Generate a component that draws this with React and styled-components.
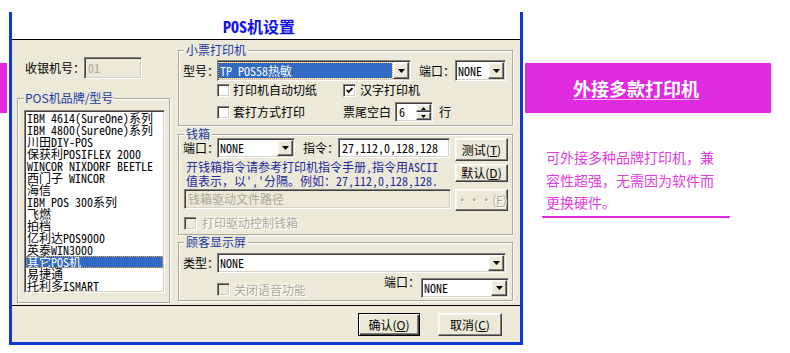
import React from 'react';
import styled, { createGlobalStyle } from 'styled-components';

const FACE = '#ECE9D8';
const UI = `"Noto Sans CJK SC", "Noto Sans", sans-serif`;
const MONO = `"Noto Sans Mono CJK SC", "Noto Sans CJK SC", monospace`;

const sunken = `
  border: 1px solid;
  border-color: #808080 #ffffff #ffffff #808080;
  box-shadow: inset 1px 1px 0 #404040, inset -1px -1px 0 #D4D0C8;
`;
const raised = `
  border: 1px solid;
  border-color: #ffffff #404040 #404040 #ffffff;
  box-shadow: inset -1px -1px 0 #808080, inset 1px 1px 0 #F6F5F0;
`;

const GlobalStyle = createGlobalStyle`
  html, body { margin: 0; padding: 0; background: #fff; }
  body { font-family: ${UI}; }
`;

const Page = styled.div`
  display: flex;
  align-items: flex-start;
  width: 790px;
  height: 353px;
  overflow: hidden;
`;

const SideStrip = styled.div`
  flex: none;
  width: 7px;
  height: 50px;
  margin: 63px 2px 0 0;
  background: #E02AE0;
`;

const Dialog = styled.div`
  flex: none;
  width: 508px;
  margin-top: 12px;
  border: 3px solid #0B3CCF;
  border-top: none;
  display: flex;
  flex-direction: column;
`;

const Header = styled.div`
  height: 27px;
  background: #fff;
  border-bottom: 1px solid #000;
  display: flex;
  align-items: center;
  justify-content: center;
  padding-right: 14px;
`;

const Title = styled.div`
  font: bold 16px/18px ${MONO};
  color: #1010F0;
`;

const Main = styled.div`
  height: 265px;
  background: ${FACE};
  border-bottom: 1px solid #000;
  display: flex;
`;

const LeftColumn = styled.div`
  width: 158px;
  padding: 17px 0 0 5px;
  display: flex;
  flex-direction: column;
`;

const RightColumn = styled.div`
  width: 335px;
  padding: 10px 0 0 3px;
  display: flex;
  flex-direction: column;
`;

const Row = styled.div`
  display: flex;
  align-items: center;
  height: ${(p) => p.$h || 20}px;
  margin-top: ${(p) => p.$mt || 0}px;
  margin-left: ${(p) => p.$ml || 0}px;
`;

const Label = styled.span`
  flex: none;
  width: ${(p) => p.$w}px;
  margin-left: ${(p) => p.$ml || 0}px;
  margin-top: ${(p) => p.$mt || 0}px;
  align-self: ${(p) => (p.$top ? 'flex-start' : 'auto')};
  font: 12px/14px ${UI};
  color: #000;
  white-space: nowrap;
`;

const TextField = styled.div`
  flex: none;
  box-sizing: border-box;
  width: ${(p) => p.$w}px;
  height: ${(p) => p.$h || 20}px;
  margin-left: ${(p) => p.$ml || 0}px;
  margin-top: ${(p) => p.$mt || 0}px;
  ${sunken};
  background: ${(p) => (p.$disabled ? FACE : '#fff')};
  color: ${(p) => (p.$disabled ? '#ACA899' : '#000')};
  font: 12px/16px ${MONO};
  padding: 1px 3px;
  display: flex;
  align-items: center;
  white-space: nowrap;
`;

const ComboBox = styled.div`
  flex: none;
  box-sizing: border-box;
  width: ${(p) => p.$w}px;
  height: ${(p) => p.$h || 20}px;
  ${sunken};
  background: #fff;
  padding: 1px;
  display: flex;
`;

const ComboValue = styled.div`
  flex: 1;
  min-width: 0;
  margin: 1px 1px 1px 0;
  padding-left: 1px;
  display: flex;
  align-items: center;
  font: 12px/14px ${MONO};
  color: ${(p) => (p.$selected ? '#fff' : '#000')};
  background: ${(p) => (p.$selected ? '#316AC5' : 'transparent')};
  outline: ${(p) => (p.$selected ? '1px dotted #E8A33D' : 'none')};
  white-space: nowrap;
`;

const DropButton = styled.div`
  flex: none;
  box-sizing: border-box;
  width: 16px;
  ${raised};
  background: ${FACE};
  display: flex;
  align-items: center;
  justify-content: center;
`;

const Arrow = ({ up }) => (
  <svg width="7" height="4" viewBox="0 0 7 4">
    <path d={up ? 'M0 4h7L3.5 0z' : 'M0 0h7L3.5 4z'} fill="#000" />
  </svg>
);

const SmallArrow = ({ up }) => (
  <svg width="5" height="3" viewBox="0 0 5 3">
    <path d={up ? 'M0 3h5L2.5 0z' : 'M0 0h5L2.5 3z'} fill="#000" />
  </svg>
);

const Combo = ({ w, h, value, selected }) => (
  <ComboBox $w={w} $h={h}>
    <ComboValue $selected={selected}>{value}</ComboValue>
    <DropButton>
      <Arrow />
    </DropButton>
  </ComboBox>
);

const SpinBox = styled.div`
  flex: none;
  box-sizing: border-box;
  width: 38px;
  height: 20px;
  margin: 0 6px 0 4px;
  ${sunken};
  background: #fff;
  padding: 1px;
  display: flex;
`;

const SpinButtons = styled.div`
  flex: none;
  width: 15px;
  display: flex;
  flex-direction: column;
`;

const SpinHalf = styled.div`
  flex: 1;
  box-sizing: border-box;
  ${raised};
  background: ${FACE};
  display: flex;
  align-items: center;
  justify-content: center;
`;

const CheckItem = styled.span`
  display: inline-flex;
  align-items: center;
  gap: ${(p) => p.$gap || 3}px;
  margin-left: ${(p) => p.$ml || 0}px;
  margin-top: ${(p) => p.$mt || 0}px;
  font: 12px/14px ${UI};
  white-space: nowrap;
`;

const CheckBox = styled.span`
  flex: none;
  box-sizing: border-box;
  width: 13px;
  height: 13px;
  ${sunken};
  background: ${(p) => (p.$disabled ? FACE : '#fff')};
  display: flex;
  align-items: center;
  justify-content: center;
`;

const CheckText = styled.span`
  color: ${(p) => (p.$disabled ? '#ACA899' : '#000')};
  background: ${(p) => (p.$disabled ? '#F1EFE6' : 'transparent')};
  text-shadow: ${(p) => (p.$disabled ? '1px 1px 0 #fff' : 'none')};
`;

const Check = ({ label, checked, disabled, gap, ml, mt }) => (
  <CheckItem $gap={gap} $ml={ml} $mt={mt}>
    <CheckBox $disabled={disabled}>
      {checked && (
        <svg width="7" height="7" viewBox="0 0 7 7">
          <path d="M0.6 3 L2.6 5.1 L6.5 1" stroke="#000" strokeWidth="1.7" fill="none" />
        </svg>
      )}
    </CheckBox>
    <CheckText $disabled={disabled}>{label}</CheckText>
  </CheckItem>
);

const Group = styled.div`
  flex: none;
  box-sizing: border-box;
  width: ${(p) => p.$w}px;
  height: ${(p) => p.$h}px;
  margin-top: ${(p) => p.$mt || 0}px;
  border: 1px solid #ACA899;
  box-shadow: inset 1px 1px 0 #fff, 1px 1px 0 #fff;
  padding: 0 3px 0 ${(p) => p.$pl || 4}px;
  display: flex;
  flex-direction: column;
`;

const GroupTitle = styled.div`
  width: fit-content;
  margin: -8px 0 0 ${(p) => p.$ml || 0}px;
  padding: 0 ${(p) => p.$pad ?? 2}px;
  background: ${FACE};
  font: 12px/14px ${UI};
  color: #1C3BA6;
  white-space: nowrap;
`;

const ListBox = styled.div`
  box-sizing: border-box;
  width: 141px;
  height: 183px;
  margin-top: 5px;
  ${sunken};
  background: #fff;
  padding: 1px;
  overflow: hidden;
`;

const ListItem = styled.div`
  height: 12px;
  font: 12px/12px ${MONO};
  color: ${(p) => (p.$selected ? '#fff' : '#000')};
  background: ${(p) => (p.$selected ? '#316AC5' : 'transparent')};
  outline: ${(p) => (p.$selected ? '1px dotted #E8A33D' : 'none')};
  outline-offset: -1px;
  padding-left: 1px;
  white-space: nowrap;
`;

const OptionGrid = styled.div`
  display: grid;
  grid-template-columns: 34px 126px auto;
  grid-template-rows: 16px 22px;
  row-gap: 3px;
  align-items: center;
  margin-top: 1px;
`;

const BlankRow = styled.div`
  display: flex;
  align-items: center;
  font: 12px/14px ${UI};
  white-space: nowrap;
`;

const SpinValue = styled.div`
  flex: 1;
  font: 12px/16px ${MONO};
  padding-left: 2px;
`;

const DrawerGrid = styled.div`
  display: grid;
  grid-template-columns: 268px 53px;
  grid-template-rows: 23px 27px 23px auto;
  column-gap: 4px;
  margin-top: -3px;
`;

const Hint = styled.div`
  margin-top: -1px;
  font: 12px/14px ${MONO};
  color: #1E2AA0;
  white-space: nowrap;
  padding-left: 3px;
`;

const Button = styled.button`
  box-sizing: border-box;
  width: ${(p) => p.$w}px;
  height: ${(p) => p.$h}px;
  margin: ${(p) => p.$mt || 0}px 0 0 0;
  padding: 0;
  background: ${FACE};
  ${raised};
  ${(p) =>
    p.$default &&
    `border: 1px solid #000;
     box-shadow: inset 1px 1px 0 #fff, inset -1px -1px 0 #404040, inset -2px -2px 0 #808080;`}
  font: 12px/14px ${UI};
  color: ${(p) => (p.$disabled ? '#ACA899' : '#000')};
  text-shadow: ${(p) => (p.$disabled ? '1px 1px 0 #fff' : 'none')};
  display: flex;
  align-items: center;
  justify-content: center;
  white-space: nowrap;
  cursor: default;
`;

const Mnemonic = styled.span`
  text-decoration: underline;
`;

const DisplayRow2 = styled.div`
  display: flex;
  align-items: center;
  height: 20px;
  margin-top: 5px;
`;

const Spacer = styled.div`
  flex: 1;
`;

const ButtonBar = styled.div`
  height: 36px;
  background: ${FACE};
  display: flex;
  justify-content: flex-end;
  align-items: flex-start;
  gap: 18px;
  padding: 7px 18px 0 0;
  box-sizing: border-box;
`;

const RightPanel = styled.div`
  flex: none;
  width: 246px;
  margin-left: 2px;
  display: flex;
  flex-direction: column;
`;

const Banner = styled.div`
  height: 50px;
  margin-top: 63px;
  background: #E02AE0;
  display: flex;
  align-items: center;
  padding-left: 48px;
`;

const BannerTitle = styled.span`
  font: bold 18px/22px ${UI};
  color: #fff;
  border-bottom: 1px solid #F6B4F6;
  margin-top: 1px;
`;

const Blurb = styled.p`
  width: 175px;
  margin: 33px 0 0 21px;
  font: 14px/22.5px ${UI};
  color: #E03CE0;
`;

const Divider = styled.div`
  width: 188px;
  height: 2px;
  margin: 2px 0 0 17px;
  background: #E02AE0;
`;

const brands = [
  'IBM 4614(SureOne)系列',
  'IBM 4800(SureOne)系列',
  '川田DIY-POS',
  '保获利POSIFLEX 2000',
  'WINCOR NIXDORF BEETLE',
  '西门子 WINCOR',
  '海信',
  'IBM POS 300系列',
  '飞燃',
  '拍档',
  '亿利达POS9000',
  '英泰WIN3000',
  '其它POS机',
  '易捷通',
  '托利多ISMART',
];

export default function App() {
  return (
    <>
      <GlobalStyle />
      <Page>
        <SideStrip />
        <Dialog>
          <Header>
            <Title>POS机设置</Title>
          </Header>
          <Main>
            <LeftColumn>
              <Row $h={22} $ml={8}>
                <Label $w={59}>收银机号：</Label>
                <TextField $w={58} $h={22} $disabled>01</TextField>
              </Row>
              <Group $w={153} $h={205} $mt={19} $pl={6}>
                <GroupTitle $pad={1}>POS机品牌/型号</GroupTitle>
                <ListBox>
                  {brands.map((b) => (
                    <ListItem key={b} $selected={b === '其它POS机'}>
                      {b}
                    </ListItem>
                  ))}
                </ListBox>
              </Group>
            </LeftColumn>

            <RightColumn>
              <Group $w={335} $h={76}>
                <GroupTitle $ml={1}>小票打印机</GroupTitle>
                <Row $h={21} $mt={3}>
                  <Label $w={34}>型号：</Label>
                  <Combo w={194} h={21} value="TP POS58热敏" selected />
                  <Label $w={36} $ml={8}>端口：</Label>
                  <Combo w={51} h={21} value="NONE" />
                </Row>
                <OptionGrid>
                  <span />
                  <Check label="打印机自动切纸" />
                  <Check label="汉字打印机" checked gap={4} />
                  <span />
                  <Check label="套打方式打印" />
                  <BlankRow>
                    票尾空白
                    <SpinBox>
                      <SpinValue>6</SpinValue>
                      <SpinButtons>
                        <SpinHalf>
                          <SmallArrow up />
                        </SpinHalf>
                        <SpinHalf>
                          <SmallArrow />
                        </SpinHalf>
                      </SpinButtons>
                    </SpinBox>
                    行
                  </BlankRow>
                </OptionGrid>
              </Group>

              <Group $w={335} $h={101} $mt={8}>
                <GroupTitle $ml={1}>钱箱</GroupTitle>
                <DrawerGrid>
                  <Row $h={20}>
                    <Label $w={34}>端口：</Label>
                    <Combo w={78} value="NONE" />
                    <Label $w={35} $ml={8}>指令：</Label>
                    <TextField $w={112}>27,112,0,128,128</TextField>
                  </Row>
                  <Button $w={53} $h={23}>
                    测试(<Mnemonic>T</Mnemonic>)
                  </Button>
                  <Hint>
                    开钱箱指令请参考打印机指令手册,指令用ASCII
                    <br />
                    值表示，以','分隔。例如：27,112,0,128,128.
                  </Hint>
                  <Button $w={53} $h={18} $mt={3}>
                    默认(<Mnemonic>D</Mnemonic>)
                  </Button>
                  <TextField $w={267} $ml={1} $mt={1} $disabled>
                    钱箱驱动文件路径
                  </TextField>
                  <Button $w={53} $h={22} $mt={1} $disabled>
                    ···(<Mnemonic>F</Mnemonic>)
                  </Button>
                  <Check label="打印驱动控制钱箱" disabled gap={5} ml={1} mt={5} />
                </DrawerGrid>
              </Group>

              <Group $w={335} $h={59} $mt={7}>
                <GroupTitle $ml={1}>顾客显示屏</GroupTitle>
                <Row $h={20} $mt={4}>
                  <Label $w={34}>类型：</Label>
                  <Combo w={289} value="NONE" />
                </Row>
                <DisplayRow2>
                  <Check label="关闭语音功能" disabled gap={4} ml={34} mt={3} />
                  <Spacer />
                  <Label $w={37} $top $mt={-3}>端口：</Label>
                  <Combo w={88} value="NONE" />
                </DisplayRow2>
              </Group>
            </RightColumn>
          </Main>
          <ButtonBar>
            <Button $w={62} $h={23} $default>
              确认(<Mnemonic>O</Mnemonic>)
            </Button>
            <Button $w={64} $h={23}>
              取消(<Mnemonic>C</Mnemonic>)
            </Button>
          </ButtonBar>
        </Dialog>
        <RightPanel>
          <Banner>
            <BannerTitle>外接多款打印机</BannerTitle>
          </Banner>
          <Blurb>可外接多种品牌打印机，兼容性超强，无需因为软件而更换硬件。</Blurb>
          <Divider />
        </RightPanel>
      </Page>
    </>
  );
}
